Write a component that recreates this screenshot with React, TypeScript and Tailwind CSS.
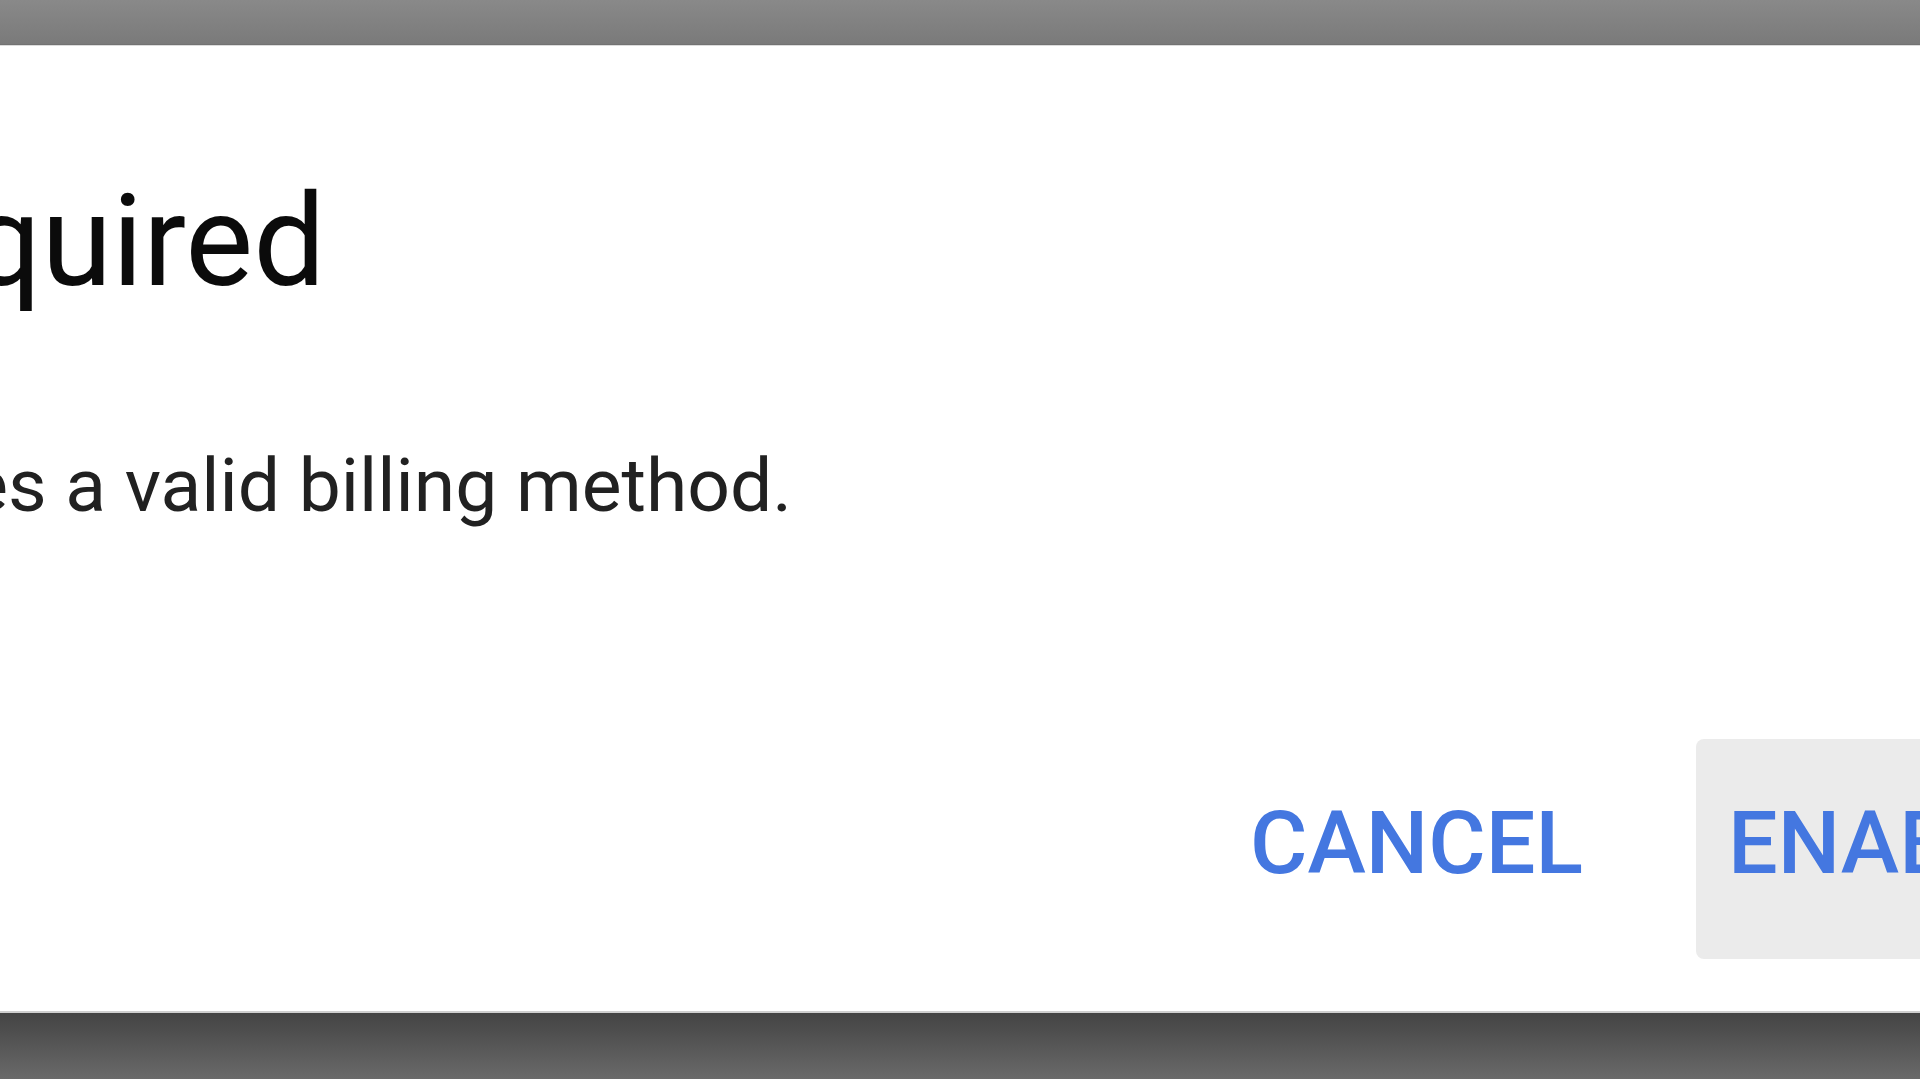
export default function App() {
  return (
    <div
      className="flex flex-col w-full h-[1079px] overflow-hidden bg-[#666]"
      style={{ fontFamily: "Roboto, 'Liberation Sans', sans-serif" }}
    >
      <div className="h-[45px] shrink-0 bg-gradient-to-b from-[#898989] to-[#7a7a7a] border-b border-[#727272]" />
      <div className="h-px shrink-0 bg-[#dcdcdc]" />
      <div className="flex flex-col shrink-0 w-[2780px] h-[965px] -ml-[648px] bg-white">
        <div className="flex flex-col px-[128px] pt-[115px]">
          <h2 className="text-[128px] leading-[160px] font-normal text-[#0b0b0b]">
            Billing required
          </h2>
          <p className="mt-[108px] text-[75px] leading-[112px] text-[#212121]">
            This API requires a valid billing method.
          </p>
        </div>
        <div className="flex flex-1 items-end justify-end gap-[81px] pr-[48px] pb-[52px]">
          <button className="flex items-center h-[220px] px-[32px] pb-3 rounded-[8px] text-[88px] font-medium text-[#4477e0]">
            CANCEL
          </button>
          <button className="flex items-center h-[220px] px-[32px] pb-3 rounded-[8px] bg-[#ebebeb] text-[88px] font-medium text-[#4477e0]">
            ENABLE
          </button>
        </div>
      </div>
      <div className="h-[2px] shrink-0 bg-[#cfcfcf]" />
      <div className="flex-1 bg-gradient-to-b from-[#444] to-[#6a6a6a]" />
    </div>
  );
}
